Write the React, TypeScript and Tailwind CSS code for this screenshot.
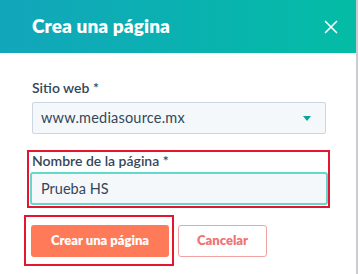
import { X } from 'lucide-react'

function App() {
  return (
    <div className="w-[360px] h-[274px] bg-white flex font-['Lato',sans-serif] text-[#33475b]">
      <div className="w-[358px] h-full border-r-2 border-[#c9cdd1] flex flex-col">
        <div className="h-[53px] shrink-0 bg-gradient-to-r from-[#12a6bb] to-[#04bca5] flex items-center justify-between pl-[32px] pr-[14px]">
          <h1 className="text-[19px] font-extrabold text-white tracking-[0.1px]">Crea una página</h1>
          <button className="text-white">
            <X size={22} strokeWidth={1.8} />
          </button>
        </div>

        <div className="flex-1 pl-[32px] pr-[30px] pt-[25px]">
          <label className="block text-[14px] font-semibold leading-[20px] mb-[4px]">Sitio web *</label>
          <div className="h-[32px] bg-[#f5f8fa] border border-[#cbd6e2] rounded-[2px] flex items-center justify-between pl-[8px] pr-[14px]">
            <span className="text-[14.5px] tracking-[0.2px]">www.mediasource.mx</span>
            <svg width="8" height="5" viewBox="0 0 8 5">
              <path d="M0 0h8L4 5z" fill="#0aa596" />
            </svg>
          </div>

          <div className="mt-[16px] -ml-[5px] -mr-[4px] border-2 border-[#e5152f] pl-[1px] pr-[0px] pt-[0px] pb-[1px]">
            <label className="block text-[14px] font-semibold leading-[18px] mb-[2px] pl-[2px]">Nombre de la página *</label>
            <div className="h-[33px] bg-[#f5f8fa] border-2 border-[#62d9cc] rounded-[3px] flex items-center pl-[9px]">
              <span className="text-[14.5px]">Prueba HS</span>
            </div>
          </div>

          <div className="mt-[7px] -ml-[8px] flex items-start gap-[4px]">
            <div className="border-2 border-[#e5152f] pl-[5px] pr-[3px] pt-[8px] pb-[7px]">
              <button className="w-[138px] h-[32px] bg-[#ff7a59] rounded-[3px] text-white text-[13px] font-extrabold">
                Crear una página
              </button>
            </div>
            <button className="mt-[10px] w-[89px] h-[32px] bg-white border border-[#f0a3a3] rounded-[3px] text-[#ef7474] text-[13px] font-extrabold">
              Cancelar
            </button>
          </div>
        </div>
      </div>
    </div>
  )
}

export default App
